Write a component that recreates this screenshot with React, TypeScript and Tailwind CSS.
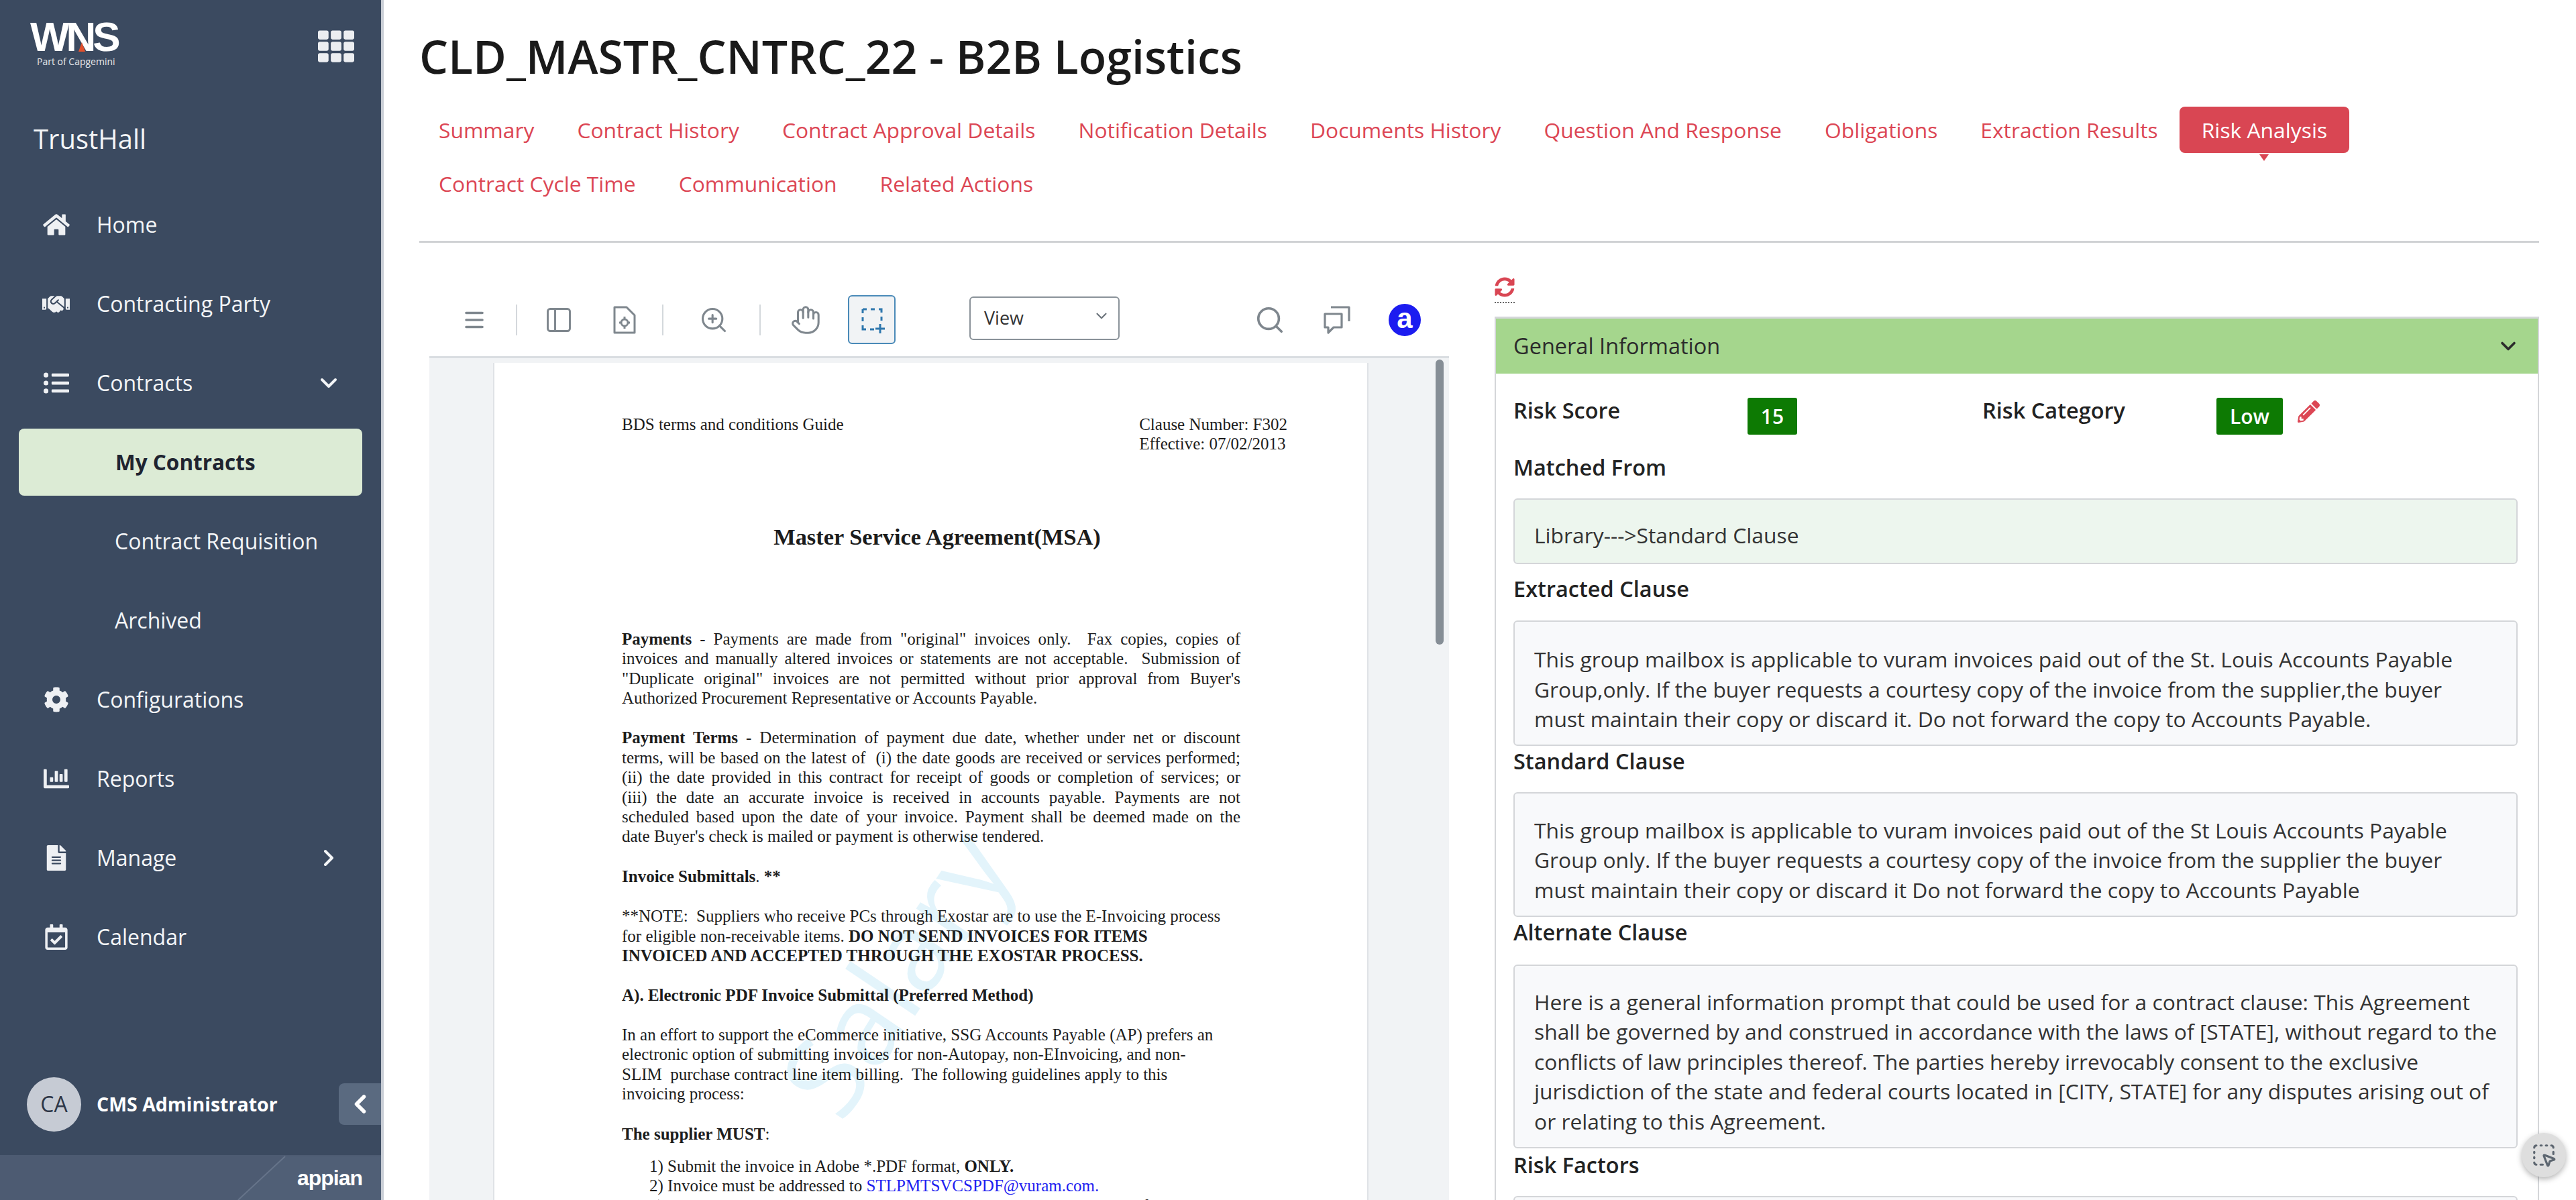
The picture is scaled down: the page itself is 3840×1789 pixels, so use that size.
import {
  ChevronDown,
  ChevronLeft,
  ChevronRight,
  Hand,
  Menu,
  PanelLeft,
  Search,
  SquareDashedMousePointer,
  ZoomIn,
} from 'lucide-react';
import {
  FaChartBar,
  FaCog,
  FaHandshake,
  FaHome,
  FaListUl,
  FaPencilAlt,
  FaRegCalendarCheck,
  FaSyncAlt,
  FaTh,
  FaFileAlt,
} from 'react-icons/fa';

const tabs = [
  'Summary',
  'Contract History',
  'Contract Approval Details',
  'Notification Details',
  'Documents History',
  'Question And Response',
  'Obligations',
  'Extraction Results',
  'Risk Analysis',
  'Contract Cycle Time',
  'Communication',
  'Related Actions',
];

function NavRow({ icon, label, chevron }: { icon: React.ReactNode; label: string; chevron?: 'down' | 'right' }) {
  return (
    <div className="h-[118px] flex items-center pl-[63px] pr-[58px] text-[#f3f5f7]">
      <div className="w-[41px] flex justify-center text-[#eef0f3]">{icon}</div>
      <span className="ml-[40px] text-[32px]">{label}</span>
      {chevron === 'down' && <ChevronDown className="ml-auto" size={40} strokeWidth={2.4} />}
      {chevron === 'right' && <ChevronRight className="ml-auto" size={40} strokeWidth={2.4} />}
    </div>
  );
}

function SubRow({ label, active }: { label: string; active?: boolean }) {
  if (active) {
    return (
      <div className="h-[118px] flex items-center px-[28px]">
        <div className="w-full h-[100px] rounded-[8px] bg-[#dcebd5] flex items-center pl-[144px] text-[31.5px] font-bold text-[#1f2430]">
          {label}
        </div>
      </div>
    );
  }
  return <div className="h-[118px] flex items-center pl-[171px] text-[32px] text-[#f3f5f7]">{label}</div>;
}

function Sidebar() {
  return (
    <aside className="w-[572px] h-full shrink-0 flex flex-col bg-[#3b4a60] border-r-[4px] border-[#c9ced6]">
      <div className="h-[276px] shrink-0 pl-[45px] pr-[40px] pt-[32px]">
        <div className="flex items-start justify-between">
          <div className="relative w-[136px] text-white">
            <div className="font-['Liberation_Sans',sans-serif] font-bold text-[62px] leading-[45px] tracking-[-5px]">WNS</div>
            <div className="absolute left-[72px] top-[31px] w-0 h-0 border-l-[5px] border-r-[5px] border-b-[14px] border-l-transparent border-r-transparent border-b-[#e2502c]" />
            <div className="mt-[6px] pl-[10px] text-[14px] leading-[18px] whitespace-nowrap text-[#e6e8ec]">Part of Capgemini</div>
          </div>
          <FaTh className="text-[#eceef1] mt-[10px]" size={54} />
        </div>
        <div className="mt-[81px] pl-[5px] text-[40px] leading-[50px] text-[#f3f5f7]">TrustHall</div>
      </div>

      <NavRow icon={<FaHome size={40} />} label="Home" />
      <NavRow icon={<FaHandshake size={41} />} label="Contracting Party" />
      <NavRow icon={<FaListUl size={38} />} label="Contracts" chevron="down" />
      <SubRow label="My Contracts" active />
      <SubRow label="Contract Requisition" />
      <SubRow label="Archived" />
      <NavRow icon={<FaCog size={38} />} label="Configurations" />
      <NavRow icon={<FaChartBar size={38} />} label="Reports" />
      <NavRow icon={<FaFileAlt size={38} />} label="Manage" chevron="right" />
      <NavRow icon={<FaRegCalendarCheck size={38} />} label="Calendar" />

      <div className="flex-1" />

      <div className="h-[124px] mb-[14px] flex items-center pl-[40px] text-white">
        <div className="w-[81px] h-[81px] rounded-full bg-[#c6cbd4] flex items-center justify-center text-[32px] text-[#2d3646]">CA</div>
        <span className="ml-[23px] text-[28.5px] font-bold whitespace-nowrap">CMS Administrator</span>
        <div className="ml-auto w-[63px] h-[62px] rounded-l-[8px] bg-[#5a6a80] flex items-center justify-center">
          <ChevronLeft size={44} strokeWidth={3} />
        </div>
      </div>

      <div className="relative h-[67px] shrink-0 bg-[#4d5b72] flex items-center justify-end pr-[28px]">
        <svg className="absolute inset-0" width="568" height="67" viewBox="0 0 568 67">
          <polygon points="355,67 425,2 568,2 568,67" fill="#505f76" />
          <line x1="355" y1="67" x2="425" y2="2" stroke="#66748a" strokeWidth="2" />
        </svg>
        <span className="relative font-['Liberation_Sans',sans-serif] font-bold text-[32px] leading-none tracking-[-1px] text-white">appian</span>
      </div>
    </aside>
  );
}

function ToolbarSep({ className }: { className: string }) {
  return <div className={`w-[2px] h-[46px] bg-[#d4d8dc] ${className}`} />;
}

function DocIcon() {
  return (
    <svg className="ml-[59px]" width="34" height="44" viewBox="0 0 34 44" fill="none" stroke="#7f878e" strokeWidth="3">
      <path d="M2 3h18l12 12v26H2z" strokeLinejoin="round" />
      <circle cx="17" cy="26" r="5" />
      <path d="M17 17v4M17 31v4M9 26h3M22 26h3" />
    </svg>
  );
}

function Toolbar() {
  return (
    <div className="h-[73px] mb-[18px] shrink-0 flex items-center pl-[49px] pr-[42px] text-[#7f878e]">
      <Menu size={36} strokeWidth={2.4} />
      <ToolbarSep className="ml-[44px]" />
      <PanelLeft className="ml-[40px]" size={44} strokeWidth={1.6} />
      <DocIcon />
      <ToolbarSep className="ml-[39px]" />
      <ZoomIn className="ml-[53px]" size={44} strokeWidth={1.7} />
      <ToolbarSep className="ml-[46px]" />
      <Hand className="ml-[44px]" size={46} strokeWidth={1.6} />
      <div className="ml-[40px] w-[71px] h-[73px] rounded-[6px] border-2 border-[#4a8ab8] bg-[#f1f3f5] flex items-center justify-center">
        <svg width="44" height="44" viewBox="0 0 44 44" fill="none" stroke="#2e77ad" strokeWidth="3">
          <path d="M8 6h6M20 6h6M32 6h4v5M36 17v6M8 6v6M8 18v6M8 30v6h5M19 36h6" />
          <path d="M34 28v14M27 35h14" />
        </svg>
      </div>
      <div className="ml-[110px] mt-[2px] w-[224px] h-[65px] self-start rounded-[6px] border-2 border-[#8a9299] flex items-center justify-between pl-[20px] pr-[12px] text-[#333]">
        <span className="text-[27px]">View</span>
        <ChevronDown className="text-[#6e767d] -mt-[8px]" size={26} strokeWidth={2} />
      </div>
      <Search className="ml-auto" size={46} strokeWidth={1.9} />
      <svg className="ml-[56px]" width="44" height="44" viewBox="0 0 44 44" fill="none" stroke="#7f878e" strokeWidth="3.2" strokeLinejoin="round">
        <path d="M3 13h25v20H16l-8 8v-8H3z" />
        <path d="M12 3h27v21" />
      </svg>
      <div className="ml-[54px] w-[48px] h-[48px] rounded-full bg-[#1c1cf0] flex items-center justify-center font-['Liberation_Sans',sans-serif] font-bold text-[42px] leading-none text-white pb-[4px]">
        a
      </div>
    </div>
  );
}

function Just({ children }: { children: React.ReactNode }) {
  return <div className="w-[922px] text-justify [text-align-last:justify]">{children}</div>;
}

function PdfPage() {
  return (
    <div className="relative w-[1305px] min-h-[1300px] bg-white border-x-2 border-[#dfe2e6] pt-[77px] pl-[190px] pr-[119px] font-['Liberation_Serif',serif] text-[25px] leading-[29.4px] text-[#1c1c1c] whitespace-pre">
      <div className="absolute left-[275px] top-[825px] w-[640px] text-center font-['Open_Sans',sans-serif] font-normal text-[165px] leading-none text-[#e3f4fb] -rotate-[56deg]">
        Salary
      </div>

      <div className="relative">
        <div className="flex justify-between">
          <div>BDS terms and conditions Guide</div>
          <div>
            <div>Clause Number: F302</div>
            <div>Effective: 07/02/2013</div>
          </div>
        </div>

        <div className="w-[940px] mt-[103px] text-center font-bold text-[34.4px] leading-[40px]">Master Service Agreement(MSA)</div>

        <div className="mt-[118px]">
          <Just><b>Payments</b> - Payments are made from "original" invoices only.  Fax copies, copies of</Just>
          <Just>invoices and manually altered invoices or statements are not acceptable.  Submission of</Just>
          <Just>"Duplicate original" invoices are not permitted without prior approval from Buyer's</Just>
          <div>Authorized Procurement Representative or Accounts Payable.</div>
        </div>

        <div className="mt-[30px]">
          <Just><b>Payment Terms</b> - Determination of payment due date, whether under net or discount</Just>
          <Just>terms, will be based on the latest of  (i) the date goods are received or services performed;</Just>
          <Just>(ii) the date provided in this contract for receipt of goods or completion of services; or</Just>
          <Just>(iii) the date an accurate invoice is received in accounts payable. Payments are not</Just>
          <Just>scheduled based upon the date of your invoice. Payment shall be deemed made on the</Just>
          <div>date Buyer's check is mailed or payment is otherwise tendered.</div>
        </div>

        <div className="mt-[30px]"><b>Invoice Submittals</b>. <b>**</b></div>

        <div className="mt-[30px]">
          <div>**NOTE:  Suppliers who receive PCs through Exostar are to use the E-Invoicing process</div>
          <div>for eligible non-receivable items. <b>DO NOT SEND INVOICES FOR ITEMS</b></div>
          <div><b>INVOICED AND ACCEPTED THROUGH THE EXOSTAR PROCESS.</b></div>
        </div>

        <div className="mt-[29px] font-bold">A). Electronic PDF Invoice Submittal (Preferred Method)</div>

        <div className="mt-[30px]">
          <div>In an effort to support the eCommerce initiative, SSG Accounts Payable (AP) prefers an</div>
          <div>electronic option of submitting invoices for non-Autopay, non-EInvoicing, and non-</div>
          <div>SLIM  purchase contract line item billing.  The following guidelines apply to this</div>
          <div>invoicing process:</div>
        </div>

        <div className="mt-[30px]"><b>The supplier MUST</b>:</div>

        <div className="mt-[19px] pl-[41px]">
          <div>1) Submit the invoice in Adobe *.PDF format, <b>ONLY.</b></div>
          <div>2) Invoice must be addressed to <span className="text-[#2020f0]">STLPMTSVCSPDF@vuram.com.</span></div>
          <div>3) Invoice must be clearly marked with the statement "Original" or "Certified"</div>
        </div>
      </div>
    </div>
  );
}

function PdfViewer() {
  return (
    <div className="w-[1520px] shrink-0 pt-[78px] flex flex-col h-full">
      <Toolbar />
      <div className="relative flex-1 min-h-0 overflow-hidden border-t-[3px] border-[#d9dde1] bg-[#f1f3f5] pl-[95px] pt-[7px]">
        <PdfPage />
        <div className="absolute right-[8px] top-[2px] w-[12px] h-[425px] rounded-full bg-[#868e96]" />
      </div>
    </div>
  );
}

function FieldLabel({ children, className }: { children: React.ReactNode; className?: string }) {
  return <div className={`h-[44px] flex items-center text-[32.5px] font-semibold text-[#222] ${className ?? ''}`}>{children}</div>;
}

function ClauseBox({ children, className }: { children?: React.ReactNode; className?: string }) {
  return (
    <div className={`rounded-[6px] border-2 border-[#d4d6d9] pl-[29px] pr-[8px] text-[31.8px] text-[#333] whitespace-nowrap ${className ?? ''}`}>
      {children}
    </div>
  );
}

function RiskPanel() {
  return (
    <div className="flex-1 min-w-0 pt-[51px]">
      <div className="w-[30px] h-[39px] border-b-2 border-dotted border-[#666]">
        <FaSyncAlt className="text-[#d94653]" size={30} />
      </div>
      <div className="mt-[20px] border-x-2 border-t-[3px] border-[#d4d6d9] h-[1400px]">
        <div className="h-[82px] bg-[#a5d68d] flex items-center justify-between pl-[26px] pr-[26px] text-[32.5px] text-[#2b2b2b]">
          <span>General Information</span>
          <ChevronDown size={36} strokeWidth={2.4} />
        </div>
        <div className="pl-[26px] pr-[30px]">
          <div className="flex items-start pt-[36px]">
            <div className="w-[349px] h-[38px] flex items-center text-[32.5px] font-semibold text-[#222]">Risk Score</div>
            <div className="w-[74px] h-[55px] rounded-[3px] bg-[#0d7a03] flex items-center justify-center text-[30px] font-semibold text-white">15</div>
            <div className="ml-[276px] w-[349px] h-[38px] flex items-center text-[32.5px] font-semibold text-[#222]">Risk Category</div>
            <div className="w-[99px] h-[55px] rounded-[3px] bg-[#0d7a03] flex items-center justify-center text-[30px] font-semibold text-white">Low</div>
            <FaPencilAlt className="ml-[22px] mt-[4px] text-[#dc4654]" size={33} />
          </div>

          <FieldLabel className="mt-[27px] mb-[24px]">Matched From</FieldLabel>
          <ClauseBox className="bg-[#edf6ee] pt-[31px] pb-[19px] leading-[44px]">Library---&gt;Standard Clause</ClauseBox>

          <FieldLabel className="mt-[15px] mb-[25px]">Extracted Clause</FieldLabel>
          <ClauseBox className="bg-[#f8f9fb] pt-[34px] pb-[15px] leading-[44.6px]">
            This group mailbox is applicable to vuram invoices paid out of the St. Louis Accounts Payable
            <br />
            Group,only. If the buyer requests a courtesy copy of the invoice from the supplier,the buyer
            <br />
            must maintain their copy or discard it. Do not forward the copy to Accounts Payable.
          </ClauseBox>

          <FieldLabel className="mt-[2px] mb-[23px]">Standard Clause</FieldLabel>
          <ClauseBox className="bg-[#f8f9fb] pt-[33px] pb-[15px] leading-[44.6px]">
            This group mailbox is applicable to vuram invoices paid out of the St Louis Accounts Payable
            <br />
            Group only. If the buyer requests a courtesy copy of the invoice from the supplier the buyer
            <br />
            must maintain their copy or discard it Do not forward the copy to Accounts Payable
          </ClauseBox>

          <FieldLabel className="mt-[2px] mb-[25px]">Alternate Clause</FieldLabel>
          <ClauseBox className="bg-[#f8f9fb] pt-[32px] pb-[15px] leading-[44.6px]">
            Here is a general information prompt that could be used for a contract clause: This Agreement
            <br />
            shall be governed by and construed in accordance with the laws of [STATE], without regard to the
            <br />
            conflicts of law principles thereof. The parties hereby irrevocably consent to the exclusive
            <br />
            jurisdiction of the state and federal courts located in [CITY, STATE] for any disputes arising out of
            <br />
            or relating to this Agreement.
          </ClauseBox>

          <FieldLabel className="mt-[4px] mb-[23px]">Risk Factors</FieldLabel>
          <ClauseBox className="bg-[#f8f9fb] h-[100px]" />
        </div>
      </div>
    </div>
  );
}

export default function App() {
  return (
    <div className="relative w-[3840px] h-[1789px] overflow-hidden flex bg-white font-['Open_Sans',sans-serif]">
      <Sidebar />

      <main className="flex-1 min-w-0 h-full flex flex-col pl-[53px] pr-[55px]">
        <h1 className="h-[159px] shrink-0 pt-[9px] flex items-center text-[68px] font-semibold text-[#1a1a1a]">
          CLD_MASTR_CNTRC_22 - B2B Logistics
        </h1>

        <div className="shrink-0 flex flex-wrap gap-y-[11px] -ml-[3px]">
          {tabs.map((tab) =>
            tab === 'Risk Analysis' ? (
              <div key={tab} className="relative h-[69px] rounded-[8px] bg-[#d94653] px-[33px] flex items-center text-[31.8px] text-white">
                {tab}
                <div className="absolute left-1/2 -translate-x-1/2 top-full mt-[2px] w-0 h-0 border-l-[7px] border-r-[7px] border-t-[10px] border-l-transparent border-r-transparent border-t-[#d94653]" />
              </div>
            ) : (
              <div key={tab} className="h-[69px] px-[32px] flex items-center text-[31.8px] text-[#dc4654]">
                {tab}
              </div>
            )
          )}
        </div>

        <div className="mt-[51px] h-[3px] shrink-0 bg-[#d0d2d4]" />

        <div className="flex-1 min-h-0 flex gap-[68px] pl-[15px]">
          <PdfViewer />
          <RiskPanel />
        </div>
      </main>

      <div className="absolute left-[3759px] top-[1689px] w-[66px] h-[66px] rounded-full bg-[#dedede] shadow-[0_3px_8px_rgba(0,0,0,0.3)] flex items-center justify-center text-[#5d6670]">
        <SquareDashedMousePointer size={38} strokeWidth={2} />
      </div>
    </div>
  );
}
